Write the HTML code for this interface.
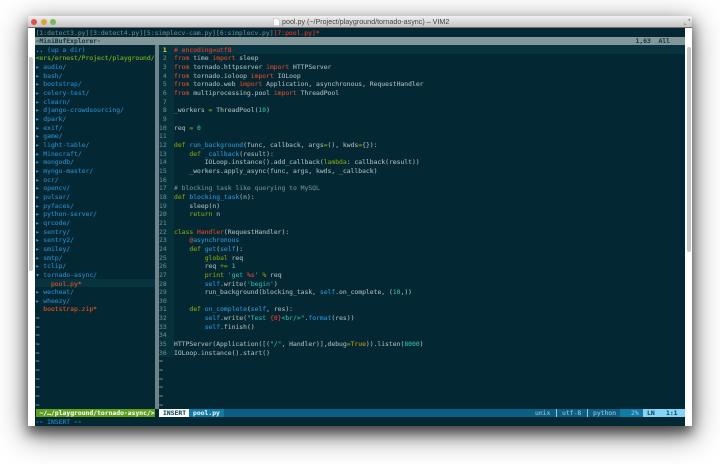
<!DOCTYPE html>
<html><head><meta charset="utf-8"><style>
html,body{margin:0;padding:0;background:#fff;width:720px;height:464px;overflow:hidden}
#win{position:absolute;left:28px;top:16px;width:664px;height:410px;background:#fff;box-shadow:0 7px 12px rgba(0,0,0,.55),0 8px 28px 2px rgba(0,0,0,.5);border-radius:2px 2px 0 0}
#bar{position:absolute;left:0;top:0;width:664px;height:11px;background:linear-gradient(#f0f0f0,#c4c4c4);border-bottom:1px solid #6f6f6f;box-sizing:content-box;border-radius:2px 2px 0 0}
.tl{position:absolute;top:3px;width:6px;height:6px;border-radius:50%}
#title{position:absolute;left:282px;top:18px;font:7.15px/8px "Liberation Sans",sans-serif;color:#444;white-space:pre;filter:blur(.25px)}
.sb{position:absolute;background:#c8c8c8;width:4px;border-radius:2px}
#term{position:absolute;left:35px;top:28px;width:650px;height:398px;background:#032833;overflow:hidden;filter:blur(.25px)}
.bx{position:absolute}
pre{position:absolute;margin:0;font:6.38px/8.65px "DejaVu Sans Mono","Liberation Mono",monospace;white-space:pre;color:#a0b2b4;-webkit-text-stroke:.12px currentColor}
b{font-weight:bold}
.r{color:#d0482a}.g{color:#7f9f10}.u{color:#2a8fd0}.c{color:#2fb0a6}.y{color:#bd9414}.m{color:#6d888e}.d{color:#e8352f}
.n{color:#62808a}.dir{color:#2a86c6}.ar{color:#34a0e0}
</style></head><body>
<div id="win">
<div id="bar"></div>
<div class="tl" style="left:3px;background:#e2514b"></div>
<div class="tl" style="left:13px;background:#e0a33a"></div>
<div class="tl" style="left:22px;background:#78b858"></div>
</div>
<svg style="position:absolute;left:273px;top:18px" width="7" height="8"><path d="M.5.5h4l2 2v5h-6z" fill="#fff" stroke="#bbb" stroke-width=".6"/></svg>
<div id="title">pool.py (~/Project/playground/tornado-async) – VIM2</div>
<svg style="position:absolute;left:683px;top:18px" width="8" height="8"><path d="M1 7V4.500L3.500 7zM7 1v2.500L4.500 1z" fill="#999"/></svg>
<div class="sb" style="left:29px;top:57px;height:214px"></div>
<div class="sb" style="left:687px;top:47px;height:205px"></div>
<div id="term">
<div class="bx" style="left:0;top:8.7px;width:650px;height:8.7px;background:#82979a"></div>
<div class="bx" style="left:124px;top:17.3px;width:526px;height:8.65px;background:#07343f"></div>
<div class="bx" style="left:124px;top:26px;width:15px;height:303px;background:#06303b"></div>
<div class="bx" style="left:0;top:250.85px;width:119.500px;height:8.65px;background:#07343f"></div>
<div class="bx" style="left:119.500px;top:17.3px;width:4px;height:363.300px;background:#6f8488"></div>
<div class="bx" style="left:1px;top:380.600px;width:119px;height:8.7px;background:#5f9e1e"></div>
<div class="bx" style="left:124px;top:380.600px;width:526px;height:8.7px;background:#0b5f84"></div>
<div class="bx" style="left:124px;top:380.600px;width:30px;height:8.7px;background:#fdfdfd"></div>
<div class="bx" style="left:154px;top:380.600px;width:35px;height:8.7px;background:#1079a6"></div>
<div class="bx" style="left:585px;top:380.600px;width:23px;height:8.7px;background:#1079a6"></div>
<div class="bx" style="left:608px;top:380.600px;width:42px;height:8.7px;background:#84d4f7"></div>
<div class="bx" style="left:521px;top:381px;width:.8px;height:8px;background:#9fc4d4"></div>
<div class="bx" style="left:552px;top:381px;width:.8px;height:8px;background:#9fc4d4"></div>

<pre style="left:.6px;top:.5px;color:#668088">[1:detect3.py][3:detect4.py][5:simplecv-cam.py][6:simplecv.py]<span class="d">[7:pool.py]*</span></pre>
<pre style="left:.6px;top:9.15px;color:#1e3d45"><b>-MiniBufExplorer-</b></pre>
<pre style="left:600.500px;top:9.15px;color:#1e3d45"><b>1,63</b></pre>
<pre style="left:623.500px;top:9.15px;color:#1e3d45"><b>All</b></pre>

<pre style="left:.6px;top:17.8px"><span style="color:#34a0e0"><b>..</b></span><span class="dir"> (up a dir)</span>
<span style="color:#7fb010">&lt;ers/ernest/Project/playground/</span>
<span class="ar">▸</span> <span class="dir">audio/</span>
<span class="ar">▸</span> <span class="dir">bash/</span>
<span class="ar">▸</span> <span class="dir">bootstrap/</span>
<span class="ar">▸</span> <span class="dir">celery-test/</span>
<span class="ar">▸</span> <span class="dir">clearn/</span>
<span class="ar">▸</span> <span class="dir">django-crowdsourcing/</span>
<span class="ar">▸</span> <span class="dir">dpark/</span>
<span class="ar">▸</span> <span class="dir">exif/</span>
<span class="ar">▸</span> <span class="dir">game/</span>
<span class="ar">▸</span> <span class="dir">light-table/</span>
<span class="ar">▸</span> <span class="dir">Minecraft/</span>
<span class="ar">▸</span> <span class="dir">mongodb/</span>
<span class="ar">▸</span> <span class="dir">myngo-master/</span>
<span class="ar">▸</span> <span class="dir">ocr/</span>
<span class="ar">▸</span> <span class="dir">opencv/</span>
<span class="ar">▸</span> <span class="dir">pulsar/</span>
<span class="ar">▸</span> <span class="dir">pyfaces/</span>
<span class="ar">▸</span> <span class="dir">python-server/</span>
<span class="ar">▸</span> <span class="dir">qrcode/</span>
<span class="ar">▸</span> <span class="dir">sentry/</span>
<span class="ar">▸</span> <span class="dir">sentry2/</span>
<span class="ar">▸</span> <span class="dir">smiley/</span>
<span class="ar">▸</span> <span class="dir">smtp/</span>
<span class="ar">▸</span> <span class="dir">tclip/</span>
<span class="ar">▾</span> <span class="dir">tornado-async/</span>
    <span style="color:#e0501f">pool.py*</span>
<span class="ar">▸</span> <span class="dir">wecheat/</span>
<span class="ar">▸</span> <span class="dir">wheezy/</span>
  <span style="color:#e0501f">bootstrap.zip*</span>
<span style="color:#8aa4aa"><b>~
~
~
~
~
~
~
~
~
~
~</b></span></pre>

<pre class="n" style="left:124px;top:17.8px"><b style="color:#e4cc20"> 1</b>
 2
 3
 4
 5
 6
 7
 8
 9
10
11
12
13
14
15
16
17
18
19
20
21
22
23
24
25
26
27
28
29
30
31
32
33
34
35
36
<span style="color:#8aa4aa"><b>~
~
~
~
~
~</b></span></pre>

<pre style="left:139px;top:17.8px"><span class="d"># encoding=utf8</span>
<span class="r">from</span> time <span class="r">import</span> sleep
<span class="r">from</span> tornado.httpserver <span class="r">import</span> HTTPServer
<span class="r">from</span> tornado.ioloop <span class="r">import</span> IOLoop
<span class="r">from</span> tornado.web <span class="r">import</span> Application, asynchronous, RequestHandler
<span class="r">from</span> multiprocessing.pool <span class="r">import</span> ThreadPool

_workers <span class="g">=</span> ThreadPool(<span class="c">10</span>)

req <span class="g">=</span> <span class="c">0</span>

<span class="g">def</span> <span class="u">run_background</span>(func, callback, args<span class="g">=</span>(), kwds<span class="g">=</span>{}):
    <span class="g">def</span> <span class="u">_callback</span>(result):
        IOLoop.instance().add_callback(<span class="g">lambda</span>: callback(result))
    _workers.apply_async(func, args, kwds, _callback)

<span class="m"># blocking task like querying to MySQL</span>
<span class="g">def</span> <span class="u">blocking_task</span>(n):
    sleep(n)
    <span class="g">return</span> n

<span class="g">class</span> <span class="r">Handler</span>(RequestHandler):
    <span class="r">@</span><span class="u">asynchronous</span>
    <span class="g">def</span> <span class="u">get</span>(<span class="u">self</span>):
        <span class="g">global</span> req
        req <span class="g">+=</span> <span class="c">1</span>
        <span class="g">print</span> <span class="c">'get </span><span class="r">%s</span><span class="c">'</span> <span class="g">%</span> req
        <span class="u">self</span>.write(<span class="c">'begin'</span>)
        run_background(blocking_task, <span class="u">self</span>.on_complete, (<span class="c">10</span>,))

    <span class="g">def</span> <span class="u">on_complete</span>(<span class="u">self</span>, res):
        <span class="u">self</span>.write(<span class="c">"Test </span><span class="d">{0}</span><span class="c">&lt;br/&gt;"</span>.<span class="u">format</span>(res))
        <span class="u">self</span>.finish()

HTTPServer(Application([(<span class="c">"/"</span>, Handler)],debug<span class="g">=</span><span class="y">True</span>)).listen(<span class="c">8000</span>)
IOLoop.instance().start()</pre>

<pre style="left:4.500px;top:381px;color:#f0f7e0"><b>~/…/playground/tornado-async/&gt;</b></pre>
<pre style="left:128px;top:381px;color:#14505f"><b>INSERT</b></pre>
<pre style="left:158px;top:381px;color:#d5eef8"><b>pool.py</b></pre>
<pre style="left:500px;top:381px;color:#8fc0d4">unix</pre>
<pre style="left:527px;top:381px;color:#8fc0d4">utf-8</pre>
<pre style="left:558px;top:381px;color:#8fc0d4">python</pre>
<pre style="left:596px;top:381px;color:#7cc4e4">2%</pre>
<pre style="left:612px;top:381px;color:#14505f"><b>LN</b></pre>
<pre style="left:631px;top:381px;color:#14505f"><b>1:1</b></pre>
<pre style="left:.6px;top:389.650px;color:#2a80b8"><b>--</b> INSERT <b>--</b></pre>
</div>
</body></html>
